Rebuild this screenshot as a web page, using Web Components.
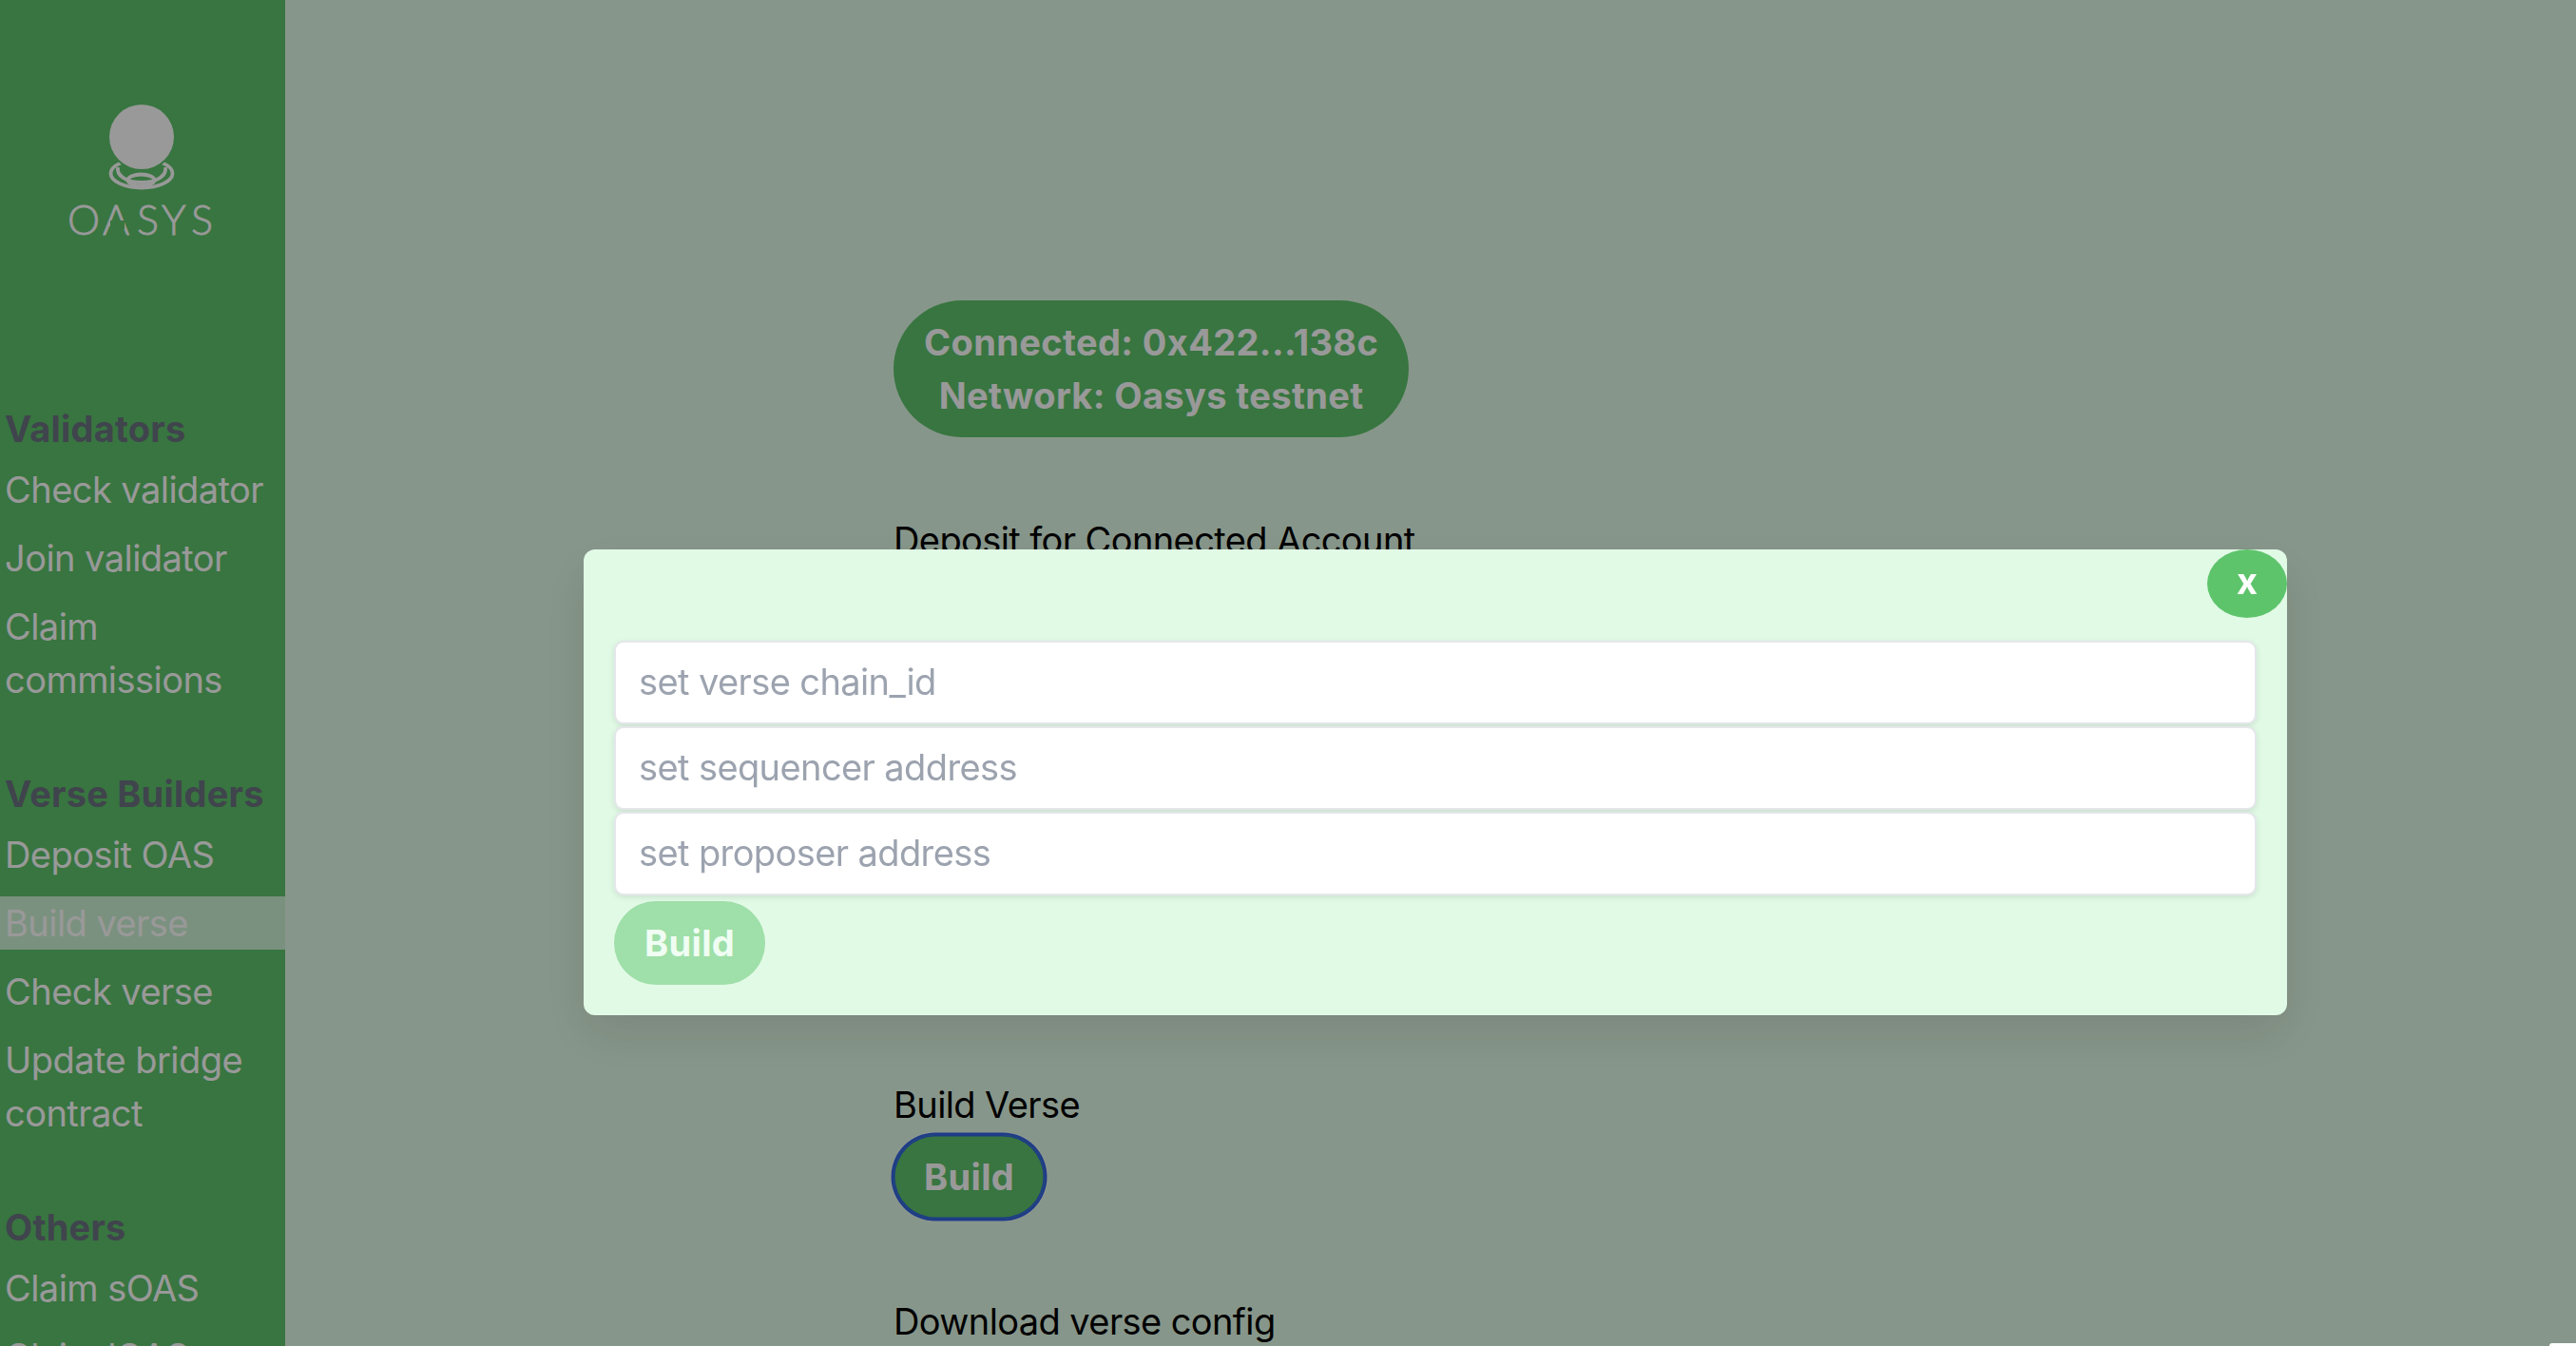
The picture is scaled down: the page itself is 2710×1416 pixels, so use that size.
<!DOCTYPE html>
<html>
<head>
<meta charset="utf-8">
<title>Oasys Hub</title>
<style>
  html, body { margin: 0; height: 100%; overflow: hidden; }
  body { font-family: Inter, "Liberation Sans", sans-serif; font-size: 38px; line-height: 56px; background: #e1fae6; }
</style>
</head>
<body>
<hub-page>
  <side-nav slot="nav">
    <nav-section title="Validators">
      <nav-item>Check validator</nav-item>
      <nav-item>Join validator</nav-item>
      <nav-item>Claim commissions</nav-item>
    </nav-section>
    <nav-section title="Verse Builders">
      <nav-item>Deposit OAS</nav-item>
      <nav-item active>Build verse</nav-item>
      <nav-item>Check verse</nav-item>
      <nav-item>Update bridge contract</nav-item>
    </nav-section>
    <nav-section title="Others">
      <nav-item>Claim sOAS</nav-item>
      <nav-item>Claim lOAS</nav-item>
    </nav-section>
  </side-nav>
  <wallet-pill address="0x422...138c" network="Oasys testnet"></wallet-pill>
  <verse-block label="Deposit for Connected Account" class="deposit"></verse-block>
  <verse-block label="Build Verse" class="build"><pill-button focused>Build</pill-button></verse-block>
  <verse-block label="Download verse config" class="download"></verse-block>
</hub-page>
<build-modal>
  <text-field placeholder="set verse chain_id"></text-field>
  <text-field placeholder="set sequencer address"></text-field>
  <text-field placeholder="set proposer address"></text-field>
  <pill-button disabled>Build</pill-button>
</build-modal>
<corner-chip></corner-chip>

<script>
class HubPage extends HTMLElement {
  constructor() {
    super();
    this.attachShadow({ mode: 'open' }).innerHTML = `
      <style>
        :host { display: grid; grid-template-columns: 300px 1fr; height: 1416px; overflow: hidden; background: #e1fae6; }
        main { padding: 316px 0 0 640px; }
        ::slotted(.deposit) { margin-top: 80px; }
        ::slotted(.build) { margin-top: 538px; }
        ::slotted(.download) { margin-top: 80px; }
      </style>
      <slot name="nav"></slot>
      <main><slot></slot></main>`;
  }
}

class SideNav extends HTMLElement {
  constructor() {
    super();
    this.attachShadow({ mode: 'open' }).innerHTML = `
      <style>
        :host { display: flex; flex-direction: column; gap: 64px; background: #5ec46c; height: 1416px; overflow: hidden; }
        svg { display: block; margin: 100px 0 99px; flex: none; }
        text { font-family: Lato, "Open Sans", sans-serif; font-weight: 300; font-size: 43px; fill: #fff; stroke: #fff; stroke-width: .8px; }
      </style>
      <svg width="300" height="160" viewBox="0 100 300 160">
        <g fill="none" stroke="#fff" stroke-width="3.8">
          <ellipse cx="149" cy="182.5" rx="32.5" ry="15"/>
          <path d="M124 176c-1.500 8 8 16 25 16s26.500-8 25-16"/>
          <ellipse cx="148.500" cy="189.500" rx="14" ry="6"/>
        </g>
        <circle cx="149" cy="144" r="36" fill="#5ec46c"/>
        <circle cx="149" cy="144" r="34" fill="#fff"/>
        <text x="71 108 144 170 201" y="247">OASYS</text>
        <rect x="116" y="232" width="15" height="9" fill="#5ec46c"/>
      </svg>
      <slot></slot>`;
  }
}

class NavSection extends HTMLElement {
  constructor() {
    super();
    const title = this.getAttribute('title');
    this.removeAttribute('title');
    this.attachShadow({ mode: 'open' }).innerHTML = `
      <style>
        :host { display: flex; flex-direction: column; gap: 16px; flex: none; }
        h3 { margin: 0 0 -8px; padding-left: 5px; font: 700 38px/56px Inter, sans-serif; color: #6b7280; letter-spacing: .2px; }
      </style>
      <h3>${title}</h3>
      <slot></slot>`;
  }
}

class NavItem extends HTMLElement {
  constructor() {
    super();
    this.attachShadow({ mode: 'open' }).innerHTML = `
      <style>
        :host { display: block; padding-left: 5px; color: #fff; font: 400 38px/56px Inter, sans-serif; letter-spacing: -.55px; }
        :host([active]) { background: #cdf2d4; }
      </style>
      <slot></slot>`;
  }
}

class WalletPill extends HTMLElement {
  constructor() {
    super();
    this.attachShadow({ mode: 'open' }).innerHTML = `
      <style>
        :host { display: block; width: fit-content; padding: 16px 32px; border-radius: 72px; background: #5ec46c; color: #fff; text-align: center; font: 700 38px/56px Inter, sans-serif; letter-spacing: .38px; }
      </style>
      Connected: ${this.getAttribute('address')}<br>Network: ${this.getAttribute('network')}`;
  }
}

class VerseBlock extends HTMLElement {
  constructor() {
    super();
    this.attachShadow({ mode: 'open' }).innerHTML = `
      <style>
        :host { display: block; color: #000; font: 400 38px/56px Inter, sans-serif; letter-spacing: -.6px; }
      </style>
      <div>${this.getAttribute('label')}</div>
      <slot></slot>`;
  }
}

class PillButton extends HTMLElement {
  constructor() {
    super();
    this.attachShadow({ mode: 'open' }).innerHTML = `
      <style>
        :host { display: block; width: fit-content; }
        :host([focused]) { margin-top: 4px; }
        button { display: block; border: 0; padding: 16px 32px; border-radius: 44px; background: #5ec46c; color: #fff; font: 700 38px/56px Inter, sans-serif; letter-spacing: .35px; }
        :host([disabled]) button { opacity: .5; }
        :host([focused]) button { box-shadow: inset 0 0 0 1.5px #3264e1, 0 0 0 2.5px #3264e1, 0 0 0 3.5px rgba(255,255,255,.45); }
      </style>
      <button><slot></slot></button>`;
  }
}

class TextField extends HTMLElement {
  constructor() {
    super();
    this.attachShadow({ mode: 'open' }).innerHTML = `
      <style>
        :host { display: block; }
        input { display: block; box-sizing: border-box; width: 100%; height: 88px; padding: 0 24px 2px; border: 2px solid #e5e7eb; border-radius: 10px; background: #fff; box-shadow: 0 2px 6px rgba(0,0,0,.1); font: 400 38px Inter, sans-serif; letter-spacing: -.6px; outline: 0; }
        input::placeholder { color: #9ca3af; opacity: 1; }
      </style>
      <input type="text" placeholder="${this.getAttribute('placeholder')}">`;
  }
}

class BuildModal extends HTMLElement {
  constructor() {
    super();
    this.attachShadow({ mode: 'open' }).innerHTML = `
      <style>
        :host { position: fixed; inset: 0; display: block; background: rgba(0,0,0,.4); }
        section { position: absolute; left: 614px; top: 578px; box-sizing: border-box; width: 1792px; height: 490px; padding: 96px 32px 0; display: flex; flex-direction: column; gap: 2px; background: #e1fae6; border-radius: 12px; box-shadow: 0 20px 50px rgba(0,0,0,.1); }
        button { position: absolute; top: 0; right: 0; box-sizing: border-box; width: 84px; height: 72px; padding: 0 0 6px; border: 0; border-radius: 42px / 36px; background: #5ec46c; color: #fff; font: 700 38px/56px Inter, sans-serif; }
        ::slotted(pill-button) { margin-top: 4px; }
      </style>
      <section>
        <button>x</button>
        <slot></slot>
      </section>`;
  }
}

class CornerChip extends HTMLElement {
  constructor() {
    super();
    this.attachShadow({ mode: 'open' }).innerHTML = `
      <style>
        :host { position: fixed; right: 0; bottom: 0; width: 28px; height: 3px; background: #fff; border-radius: 6px 0 0 0; }
      </style>`;
  }
}

customElements.define('hub-page', HubPage);
customElements.define('side-nav', SideNav);
customElements.define('nav-section', NavSection);
customElements.define('nav-item', NavItem);
customElements.define('wallet-pill', WalletPill);
customElements.define('verse-block', VerseBlock);
customElements.define('pill-button', PillButton);
customElements.define('text-field', TextField);
customElements.define('build-modal', BuildModal);
customElements.define('corner-chip', CornerChip);
</script>
</body>
</html>
